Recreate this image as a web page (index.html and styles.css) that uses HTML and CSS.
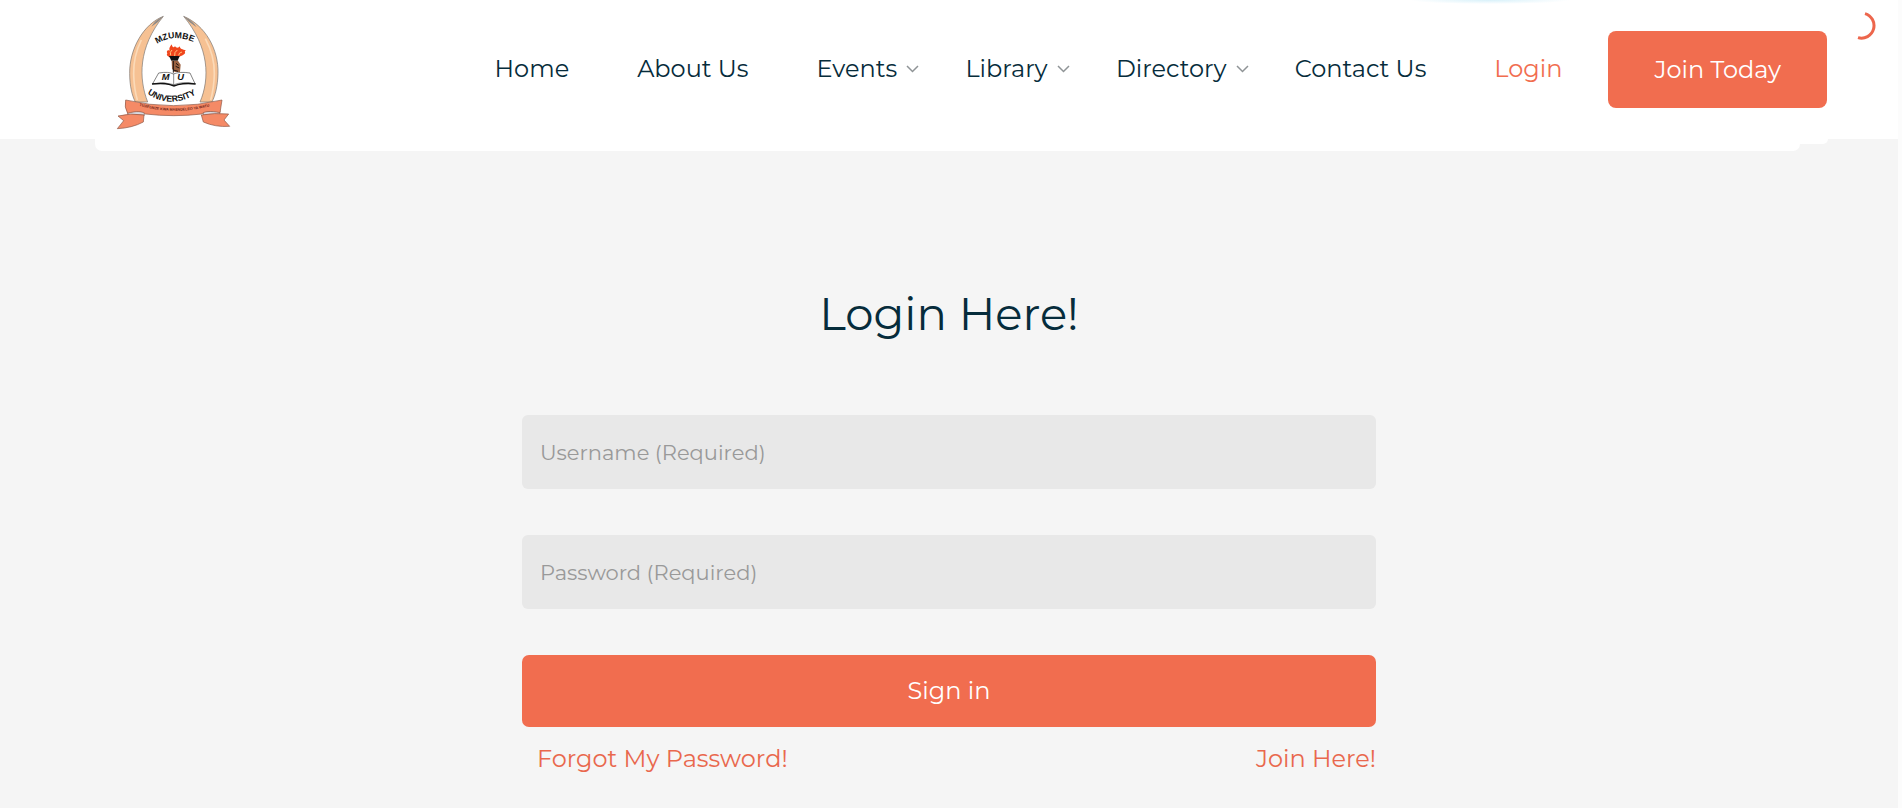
FILE: index.html
```html
<!DOCTYPE html>
<html lang="en">
<head>
<meta charset="utf-8">
<meta name="viewport" content="width=device-width, initial-scale=1">
<title>Mzumbe University Alumni - Login</title>
<link rel="stylesheet" href="styles.css">
</head>
<body>
<div class="page">
  <header class="header">
    <a class="logo" href="#" aria-label="Mzumbe University">
      <svg class="logo-art" viewBox="78 36 348 360" aria-hidden="true">
        <defs>
          <path id="arc-top" d="M201 132Q252 98 320 130"/>
          <path id="arc-bottom" d="M172 280Q246 336 340 268"/>
          <path id="arc-motto" d="M148 317Q250 348 368 317"/>
        </defs>
        <g stroke="#77736f" stroke-width="2" fill="#f6c193">
          <path d="M220 49C160 72 118 148 119 220C119 258 126 286 136 306L173 306C146 236 144 142 220 49Z"/>
          <path d="M281 49C346 76 386 148 384 220C383 258 376 286 366 306L330 306C360 236 358 142 281 49Z"/>
        </g>
        <path d="M220 49Q196 60 184 80L204 66ZM281 49Q308 62 320 82L298 66Z" fill="#8d8a88"/>
        <path d="M154 120Q130 168 131 222Q132 266 142 300M346 116Q374 168 373 222Q372 264 362 300" fill="none" stroke="#fbdab8" stroke-width="5"/>
        <text class="logo-name"><textPath href="#arc-top">MZUMBE</textPath></text>
        <path d="M240 172C232 169 228 165 232 160C228 153 233 148 239 152C236 143 242 138 245 133C247 143 252 144 255 138C258 145 266 144 270 139C269 148 278 148 288 151C280 154 290 158 282 163C274 170 264 173 240 172Z" fill="#f0461c"/>
        <path d="M242 166Q238 156 246 150M254 168Q252 156 262 150M266 166Q266 158 276 156" stroke="#ffc37b" stroke-width="3" fill="none"/>
        <path d="M237 168H269L263 182H244Z" fill="#111"/>
        <path d="M245 182H264L272 194L270 216H254L246 206Z" fill="#9b613f"/>
        <path d="M250 183V218M258 190L266 196M257 199L268 204M250 210L264 214" stroke="#211510" stroke-width="3"/>
        <path d="M206 219Q236 214 250 222Q270 214 300 219L315 251Q278 244 252 254Q222 244 188 251Z" fill="#fff" stroke="#444" stroke-width="2"/>
        <path d="M251 221V254" stroke="#555" stroke-width="2"/>
        <path d="M186 252Q220 248 240 254L252 258L264 254Q288 248 317 252" fill="none" stroke="#111" stroke-width="4"/>
        <text class="logo-letter" x="215" y="240">M</text>
        <text class="logo-letter" x="262" y="240">U</text>
        <text class="logo-name"><textPath href="#arc-bottom">UNIVERSITY</textPath></text>
        <g stroke="#8a5646" stroke-width="2">
          <path d="M112 332L163 333V346Q138 340 114 348Z" fill="#d9dce4"/>
          <path d="M390 332L340 334V346Q364 340 388 348Z" fill="#d9dce4"/>
          <path d="M162 345Q122 338 84 348L101 362L82 386Q126 384 160 366Z" fill="#f58a66"/>
          <path d="M334 345Q374 338 416 342L402 360L419 379Q376 382 340 366Z" fill="#f58a66"/>
          <path d="M107 300Q250 334 396 300L390 338C362 332 340 334 336 342Q252 352 166 342C160 334 138 332 113 340Q102 322 107 300Z" fill="#f58a66"/>
        </g>
        <text class="logo-motto"><textPath href="#arc-motto">TUJIFUNZE KWA MAENDELEO YA WATU</textPath></text>
      </svg>
    </a>
    <nav class="nav" aria-label="Main">
      <a class="nav-link" href="#">Home</a>
      <a class="nav-link" href="#">About Us</a>
      <a class="nav-link has-menu" href="#">Events <svg class="chevron" viewBox="0 0 13 8" aria-hidden="true"><path d="M1 1L6.500 6.500L12 1"/></svg></a>
      <a class="nav-link has-menu" href="#">Library <svg class="chevron" viewBox="0 0 13 8" aria-hidden="true"><path d="M1 1L6.500 6.500L12 1"/></svg></a>
      <a class="nav-link has-menu" href="#">Directory <svg class="chevron" viewBox="0 0 13 8" aria-hidden="true"><path d="M1 1L6.500 6.500L12 1"/></svg></a>
      <a class="nav-link" href="#">Contact Us</a>
      <a class="nav-link active" href="#">Login</a>
    </nav>
    <a class="join-button" href="#">Join Today</a>
    <svg class="spinner" viewBox="0 0 28 28" aria-hidden="true"><path d="M17 1.600A12.500 12.500 0 0 1 10 25.600"/></svg>
  </header>
  <div class="shelf shelf-wide"></div>
  <div class="shelf shelf-narrow"></div>
  <main class="main">
    <h1 class="title">Login Here!</h1>
    <form class="form">
      <input class="field" type="text" aria-label="Username" placeholder="Username (Required)">
      <input class="field" type="password" aria-label="Password" placeholder="Password (Required)">
      <button class="submit" type="submit">Sign in</button>
    </form>
    <div class="links">
      <a class="text-link" href="#">Forgot My Password!</a>
      <a class="text-link" href="#">Join Here!</a>
    </div>
  </main>
</div>
</body>
</html>
```
FILE: styles.css
```css
* { box-sizing: border-box; }

body {
  margin: 0;
  background: #fcfcfc;
  color: #062c3b;
  font-family: Montserrat, Inter, sans-serif;
  font-size: 24px;
  font-weight: 400;
  line-height: 32px;
}

a { color: inherit; text-decoration: none; }

.page {
  min-height: 100vh;
  margin-right: 4px;
  background: #f5f5f5;
}

.header {
  position: relative;
  display: flex;
  align-items: flex-start;
  padding: 12px 71px 7px 116px;
  background: radial-gradient(ellipse 80px 4px at 1490px 0, #d8f1fa, #fff);
}

.logo { display: block; }
.logo-art { display: block; width: 116px; height: 120px; }
.logo-name { font: 700 26px "Liberation Sans", sans-serif; fill: #111; }
.logo-letter { font: italic 700 28px "Liberation Sans", sans-serif; fill: #111; }
.logo-motto { font: 700 11px "Liberation Sans", sans-serif; fill: #6b1d14; }

.nav {
  display: flex;
  flex: 1;
  justify-content: flex-end;
  margin: 41px 12px 0 0;
}
.nav-link { padding: 0 34px; white-space: nowrap; }
.nav-link.has-menu { padding-right: 12px; }
.nav-link.active { color: #f16d4f; }

.chevron { width: 13px; height: 8px; margin-left: 3px; vertical-align: 4px; }
.chevron path { fill: none; stroke: #8f9496; stroke-width: 1.500; }

.join-button {
  margin-top: 19px;
  padding: 23px 46px 22px;
  border-radius: 8px;
  background: #f16d4f;
  color: #fff;
  white-space: nowrap;
}

.spinner { position: absolute; top: 12px; right: 22px; width: 28px; height: 28px; }
.spinner path { fill: none; stroke: #ed664c; stroke-width: 3; }

.shelf { margin-left: 95px; background: #fff; }
.shelf-wide { height: 5px; margin-right: 70px; border-radius: 0 0 5px 0; }
.shelf-narrow { height: 7px; margin-right: 98px; border-radius: 0 0 8px 8px; }

.main {
  width: 45%;
  margin: 0 auto;
  padding: 131px 0 32px;
}
.title {
  margin: 0 0 69px;
  font-size: 45px;
  font-weight: 400;
  line-height: 64px;
  text-align: center;
}
.form { display: grid; gap: 46px; }
.field {
  width: 100%;
  height: 74px;
  padding: 0 18px;
  border: 0;
  border-radius: 6px;
  background: #e8e8e8;
  color: #062c3b;
  font: inherit;
  font-size: 21px;
}
.field::placeholder { color: #999; opacity: 1; }
.submit {
  height: 72px;
  border: 0;
  border-radius: 7px;
  background: #f16d4f;
  color: #fff;
  font: inherit;
}
.links {
  display: flex;
  justify-content: space-between;
  padding: 16px 0 0 15px;
}
.text-link { color: #e9684d; }
```
